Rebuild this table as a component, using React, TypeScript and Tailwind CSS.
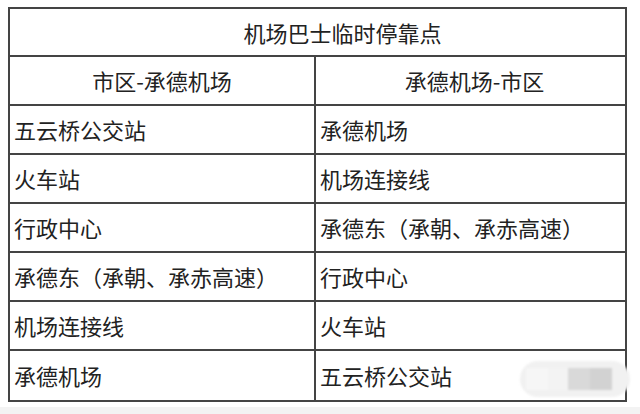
const rows: [string, string][] = [
  ["五云桥公交站", "承德机场"],
  ["火车站", "机场连接线"],
  ["行政中心", "承德东（承朝、承赤高速）"],
  ["承德东（承朝、承赤高速）", "行政中心"],
  ["机场连接线", "火车站"],
  ["承德机场", "五云桥公交站"],
];

export default function App() {
  return (
    <div
      className="relative w-[640px] h-[414px] bg-white text-[#222] text-[22px] overflow-hidden"
      style={{ fontFamily: '"Noto Sans CJK SC", "Noto Sans", sans-serif' }}
    >
      <div className="pt-[7px] pl-[8px] pb-[5px]">
        <div className="w-[619px] border-2 border-[#444]">
          <div className="h-[48px] border-b-2 border-[#444] flex items-center justify-center pl-[50px]">
            机场巴士临时停靠点
          </div>
          <div className="grid grid-cols-[306px_1fr] h-[49px] border-b-2 border-[#444]">
            <div className="flex items-center justify-center border-r-2 border-[#444]">市区-承德机场</div>
            <div className="flex items-center justify-center pl-[8px]">承德机场-市区</div>
          </div>
          {rows.map(([a, b], i) => (
            <div
              key={i}
              className={
                i < rows.length - 1
                  ? "grid grid-cols-[306px_1fr] h-[49px] border-b-2 border-[#444]"
                  : "grid grid-cols-[306px_1fr] h-[49px]"
              }
            >
              <div className="flex items-center pl-[4px] border-r-2 border-[#444] whitespace-nowrap">{a}</div>
              <div className="flex items-center pl-[4px] whitespace-nowrap">{b}</div>
            </div>
          ))}
        </div>
      </div>
      <div className="h-[20px] bg-[#f3f3f3]" />

      {/* blurred watermark */}
      <div className="absolute left-[520px] top-[361px] w-[110px] h-[36px] rounded-full bg-[#f1f1f1] flex items-center pl-[6px] blur-[1px]">
        <div className="w-[22px] h-[22px] bg-[#f6f6f6]" />
        <div className="w-[20px] h-[22px] bg-[#f3f3f3]" />
        <div className="w-[22px] h-[22px] bg-[#d9d9d9]" />
        <div className="w-[22px] h-[22px] bg-[#d2d2d2]" />
      </div>
    </div>
  );
}
